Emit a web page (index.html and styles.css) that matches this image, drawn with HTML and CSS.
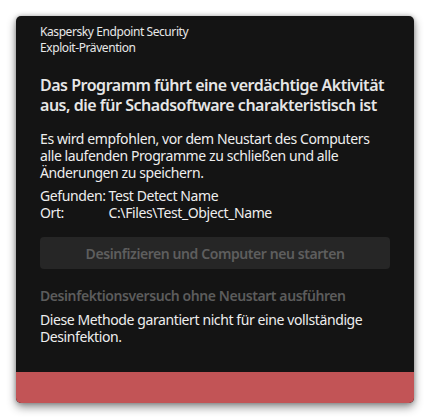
FILE: index.html
```html
<!DOCTYPE html>
<html lang="de">
<head>
<meta charset="utf-8">
<title>Kaspersky Endpoint Security</title>
<link rel="stylesheet" href="styles.css">
</head>
<body>
<div class="card">
  <div class="content">
    <div class="app">
      <div>Kaspersky Endpoint Security</div>
      <div>Exploit-Prävention</div>
    </div>
    <h1 class="title">Das Programm führt eine verdächtige Aktivität aus, die für Schadsoftware charakteristisch ist</h1>
    <p class="text">Es wird empfohlen, vor dem Neustart des Computers alle laufenden Programme zu schließen und alle Änderungen zu speichern.</p>
    <div class="details">
      <div class="labels">Gefunden:<br>Ort:</div>
      <div class="values">Test Detect Name<br>C:\Files\Test_Object_Name</div>
    </div>
    <button class="btn" disabled>Desinfizieren und Computer neu starten</button>
    <div class="link">Desinfektionsversuch ohne Neustart ausführen</div>
    <p class="text note">Diese Methode garantiert nicht für eine vollständige Desinfektion.</p>
  </div>
  <div class="footer"></div>
</div>
</body>
</html>
```
FILE: styles.css
```css
html, body {
  margin: 0;
  padding: 0;
  background: #ffffff;
}
body {
  padding: 16px;
  font-family: "Noto Sans", "Open Sans", sans-serif;
  letter-spacing: -0.025em;
  color: #ececec;
}
.card {
  width: 398px;
  height: 387px;
  background: #141414;
  border-radius: 5px;
  overflow: hidden;
  display: flex;
  flex-direction: column;
  box-shadow: 0 4px 10px rgba(0, 0, 0, 0.45), 0 0 4px rgba(0, 0, 0, 0.25);
}
.content {
  flex: 1;
  padding: 8px 24px 0;
}
.app {
  font-size: 12px;
  line-height: 16px;
  letter-spacing: -0.035em;
  color: #e8e8e8;
}
.title {
  margin: 19px 0 0;
  font-size: 16px;
  line-height: 20px;
  font-weight: 600;
  letter-spacing: -0.03em;
  color: #e6e6e6;
}
.text {
  margin: 15px 0 0;
  font-size: 14px;
  line-height: 17px;
  color: #eeeeee;
}
.details {
  margin-top: 6px;
  display: flex;
  gap: 3px;
  font-size: 14px;
  line-height: 17px;
  color: #eeeeee;
}
.labels {
  white-space: nowrap;
}
.btn {
  display: block;
  width: 100%;
  height: 32px;
  margin-top: 16px;
  border: none;
  border-radius: 4px;
  background: #262626;
  color: #5e5e5e;
  font-family: inherit;
  letter-spacing: -0.03em;
  font-size: 14px;
  font-weight: 600;
}
.link {
  margin-top: 18px;
  font-size: 14px;
  line-height: 17px;
  font-weight: 600;
  letter-spacing: -0.03em;
  color: #5c5c5c;
}
.note {
  margin-top: 7px;
}
.footer {
  height: 31px;
  background: #c25456;
}
```
